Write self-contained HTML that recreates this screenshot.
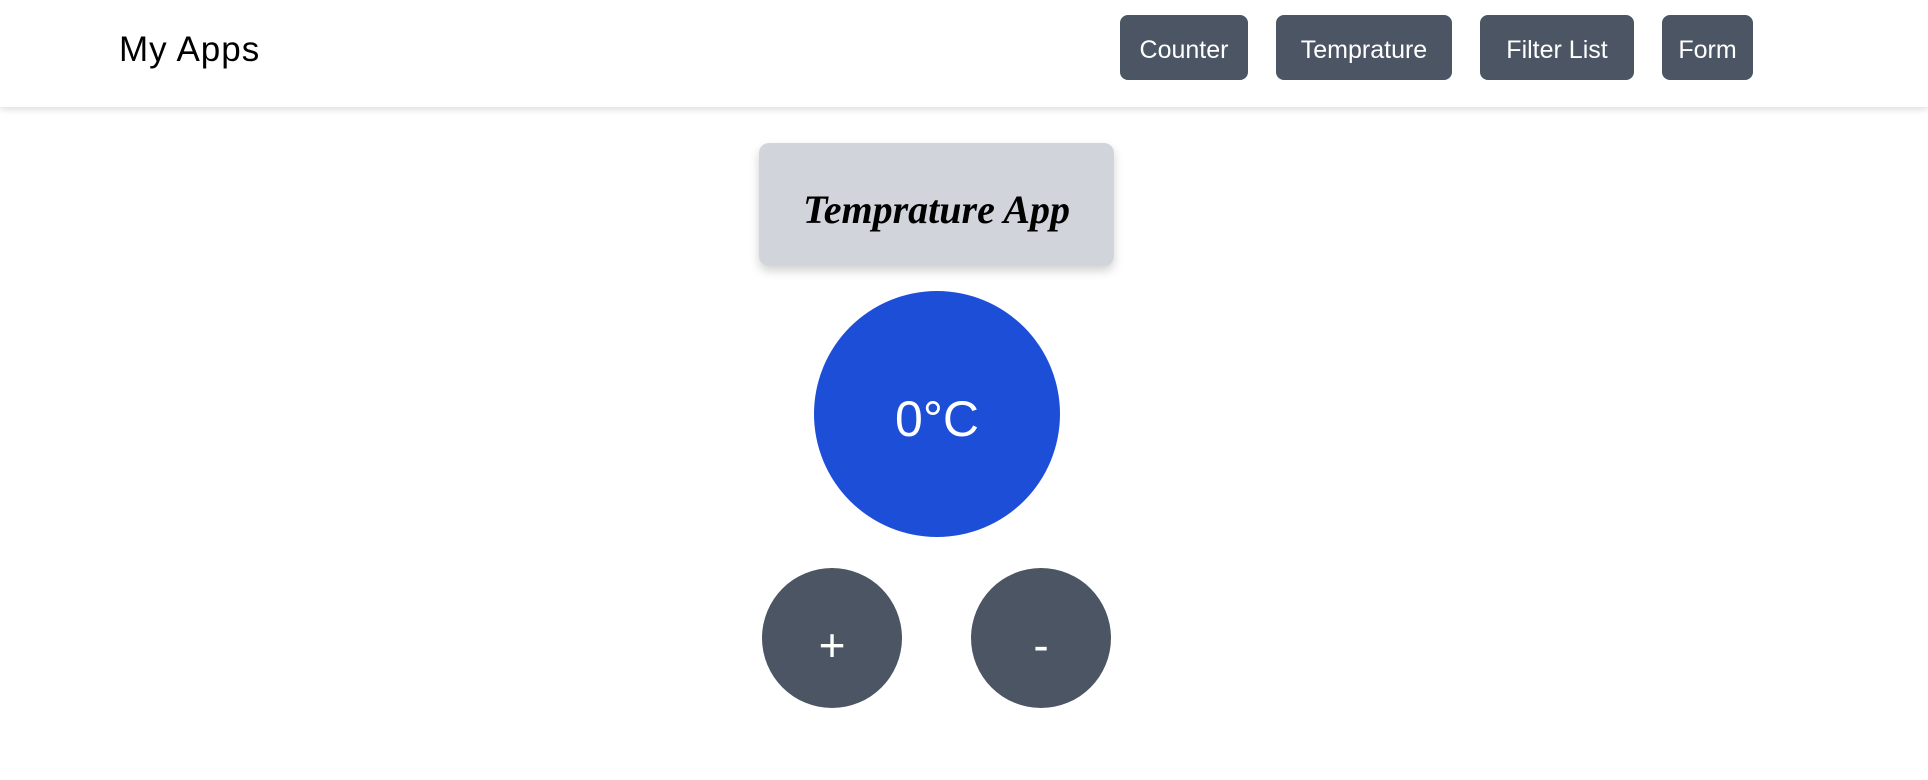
<!DOCTYPE html>
<html><head><meta charset="utf-8"><style>
*{margin:0;padding:0;box-sizing:border-box}
body{width:1928px;height:780px;background:#fff;font-family:"Liberation Sans",sans-serif;position:relative;overflow:hidden}
.hdr{position:absolute;left:0;top:0;width:1928px;height:107px;background:#fff;box-shadow:0 3px 6px rgba(0,0,0,0.12)}
.logo{position:absolute;left:119px;top:30px;font-size:35px;letter-spacing:1px;color:#000}
.nb{position:absolute;top:15px;height:65px;padding-top:5px;background:#4b5563;color:#fff;border-radius:8px;font-size:25px;display:flex;align-items:center;justify-content:center}
.title{position:absolute;left:759px;top:143px;width:355px;height:123px;padding-top:10px;background:#d1d5db;border-radius:10px;box-shadow:0 5px 10px rgba(0,0,0,0.18);display:flex;align-items:center;justify-content:center;font-family:"Liberation Serif",serif;font-style:italic;font-weight:bold;font-size:40px;color:#000}
.circ{position:absolute;border-radius:50%;display:flex;align-items:center;justify-content:center;color:#fff}
</style></head><body>
<div class="hdr">
<div class="logo">My Apps</div>
<div class="nb" style="left:1120px;width:128px">Counter</div>
<div class="nb" style="left:1276px;width:176px">Temprature</div>
<div class="nb" style="left:1480px;width:154px">Filter List</div>
<div class="nb" style="left:1662px;width:91px">Form</div>
</div>
<div class="title">Temprature App</div>
<div class="circ" style="left:814px;top:291px;width:246px;height:246px;padding-top:10px;background:#1d4ed8;font-size:50px">0°C</div>
<div class="circ" style="left:762px;top:568px;width:140px;height:140px;padding-top:14px;background:#4b5563;font-size:46px">+</div>
<div class="circ" style="left:971px;top:568px;width:140px;height:140px;padding-top:14px;background:#4b5563;font-size:46px">-</div>
</body></html>
